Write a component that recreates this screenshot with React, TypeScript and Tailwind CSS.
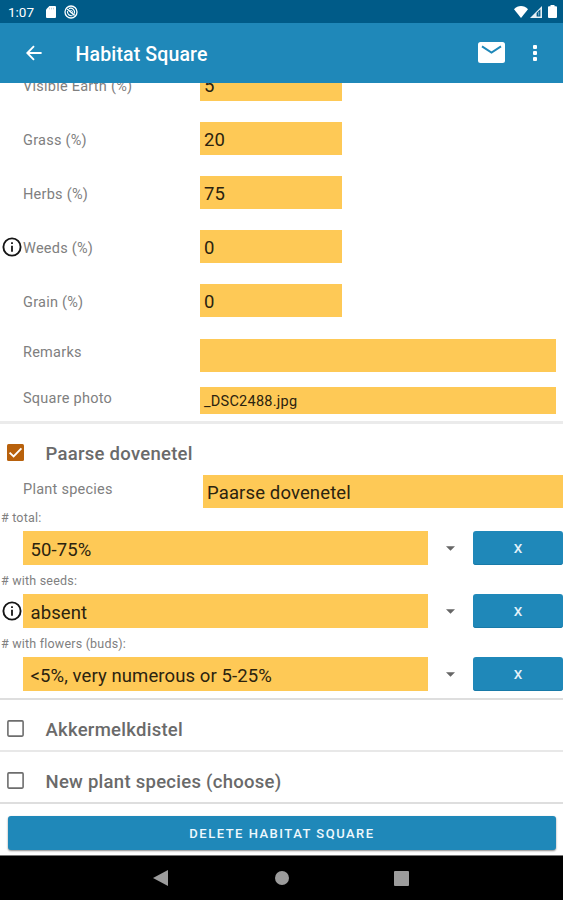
import { useState } from "react";

const coverage = [
  { label: "Visible Earth (%)", value: "5", info: false },
  { label: "Grass (%)", value: "20", info: false },
  { label: "Herbs (%)", value: "75", info: false },
  { label: "Weeds (%)", value: "0", info: true },
  { label: "Grain (%)", value: "0", info: false },
];

const counts = [
  { label: "# total:", value: "50-75%", info: false },
  { label: "# with seeds:", value: "absent", info: true },
  { label: "# with flowers (buds):", value: "<5%, very numerous or 5-25%", info: false },
];

function InfoIcon() {
  return (
    <svg width="20" height="20" viewBox="0 0 20 20" fill="none">
      <circle cx="10" cy="10" r="8.6" stroke="#151515" strokeWidth="1.9" />
      <path d="M9.1 5.2h1.8v1.9H9.1zM9.1 8.7h1.8v6H9.1z" fill="#151515" />
    </svg>
  );
}

function StatusBar() {
  return (
    <div className="flex h-[23px] shrink-0 items-center bg-[#005b88] pr-[6px] pl-[8px] text-white">
      <span className="w-[38px] pt-[2px] text-[13.5px] leading-none">1:07</span>
      <svg className="mt-px" width="10" height="12" viewBox="0 0 10 12">
        <path d="M3.4 0H9a1 1 0 0 1 1 1v10a1 1 0 0 1-1 1H1a1 1 0 0 1-1-1V3.4z" fill="#fff" />
        <path d="M3.5 1.8v1.6M5.5 1.8v1.6M7.5 1.8v1.6" stroke="#9fc3d6" strokeWidth="0.7" />
      </svg>
      <svg className="ml-[8px]" width="14" height="14" viewBox="0 0 14 14" fill="none" stroke="#fff">
        <circle cx="7" cy="7" r="6" strokeWidth="1.3" />
        <path d="M3.2 4l7.4 6.4" strokeWidth="1.4" />
        <path d="M5 3.6a4 4 0 0 1 5.4 5M3.5 6.2a3.8 3.8 0 0 0 5 4.3" strokeWidth="1.2" />
        <path d="M6.4 5.6a1.7 1.7 0 0 1 2.3 2" strokeWidth="1" />
      </svg>
      <svg className="ml-auto" width="14" height="12" viewBox="0 0 14 12">
        <path d="M7 12L0 3.2C2 1 4.4 0 7 0s5 1 7 3.2z" fill="#fff" />
      </svg>
      <svg className="ml-[2px]" width="12" height="12" viewBox="0 0 12 12">
        <path d="M0 12L12 0v12z" fill="#e6f0f5" />
        <path d="M6.6 7L10.4 3.2v7.2H6.6z" fill="#005b88" />
        <path d="M8.7 6v3.6" stroke="#9fc3d6" strokeWidth="0.8" />
      </svg>
      <svg className="ml-[6px]" width="9" height="13" viewBox="0 0 9 13">
        <path d="M2.5 0h4v1.3H8a1 1 0 0 1 1 1V12a1 1 0 0 1-1 1H1a1 1 0 0 1-1-1V2.3a1 1 0 0 1 1-1h1.5z" fill="#fff" />
      </svg>
    </div>
  );
}

function AppBar() {
  return (
    <header className="flex h-[60px] shrink-0 items-center bg-[#1f88b9] pr-[26px] pl-[26px] text-white">
      <svg className="mb-px" width="16" height="16" viewBox="0 0 16 16" fill="none" stroke="#fff" strokeWidth="1.9">
        <path d="M15.6 8H1.6M8 1.2L1.3 8L8 14.8" />
      </svg>
      <h1 className="ml-[33.5px] pt-[3px] text-[19.5px] leading-none font-medium tracking-[0.15px]">Habitat Square</h1>
      <svg className="ml-auto mb-px" width="27" height="21" viewBox="0 0 27 21">
        <rect width="27" height="21" rx="2.5" fill="#fff" />
        <path d="M4 4.4L13.5 10.6L23 4.4" fill="none" stroke="#1f88b9" strokeWidth="1.9" />
      </svg>
      <svg className="ml-[28px]" width="4" height="16" viewBox="0 0 4 16" fill="#fff">
        <rect width="4" height="4" rx="1" />
        <rect y="6" width="4" height="4" rx="1" />
        <rect y="12" width="4" height="4" rx="1" />
      </svg>
    </header>
  );
}

function Checkbox({ checked, onChange }: { checked: boolean; onChange: () => void }) {
  return (
    <button onClick={onChange} className="ml-[7px] h-[17px] w-[17px] shrink-0">
      <svg width="17" height="17" viewBox="0 0 17 17" fill="none">
        {checked ? (
          <>
            <rect width="17" height="17" rx="1.5" fill="#b8610c" />
            <path d="M2.6 8.6L6.6 12.4L14.4 4.4" stroke="#fff" strokeWidth="1.9" />
          </>
        ) : (
          <rect x="0.9" y="0.9" width="15.2" height="15.2" rx="1" stroke="#6d6d6d" strokeWidth="1.6" />
        )}
      </svg>
    </button>
  );
}

function SpeciesHeader({ name, on }: { name: string; on: boolean }) {
  const [checked, setChecked] = useState(on);

  return (
    <div className="flex h-[19px] items-center">
      <Checkbox checked={checked} onChange={() => setChecked(!checked)} />
      <span className="ml-[21.5px] pt-[4px] text-[18.5px] leading-none font-medium tracking-[0.27px] text-[#6a6a6a]">
        {name}
      </span>
    </div>
  );
}

function App() {
  return (
    <div className="flex h-[900px] w-[563px] flex-col overflow-hidden bg-white font-[Roboto,sans-serif]">
      <StatusBar />
      <AppBar />

      <main className="h-[772px] shrink-0 overflow-hidden">
        <div className="-mt-[15px] flex flex-col gap-[21px]">
          {coverage.map((row) => (
            <div key={row.label} className="flex h-[33px] items-center">
              <div className="w-[23px] pl-[2px]">{row.info && <InfoIcon />}</div>
              <span className="w-[177px] pt-[6px] text-[14.5px] leading-none tracking-[0.25px] text-[#808080]">
                {row.label}
              </span>
              <div className="flex h-[33px] w-[142px] items-center bg-[#fec956] pt-[3px] pl-[4px] text-[18.5px] leading-none text-[#2b230f]">
                {row.value}
              </div>
            </div>
          ))}
        </div>

        <div className="mt-[22px] flex h-[33px] pr-[7px] pl-[23px]">
          <span className="w-[177px] pt-[7px] text-[14.5px] leading-none tracking-[0.25px] text-[#808080]">Remarks</span>
          <div className="flex-1 bg-[#fec956]" />
        </div>
        <div className="mt-[15px] flex h-[27px] pr-[7px] pl-[23px]">
          <span className="w-[177px] pt-[5px] text-[14.5px] leading-none tracking-[0.25px] text-[#808080]">
            Square photo
          </span>
          <div className="flex-1 bg-[#fec956] pt-[8px] pl-[4px] text-[14.5px] leading-none tracking-[0.25px] text-[#2b230f]">
            _DSC2488.jpg
          </div>
        </div>

        <section className="mt-[7px] h-[277px] border-t-[3px] border-[#ebebeb] pt-[19px]">
          <SpeciesHeader name="Paarse dovenetel" on />
          <div className="mt-[13px] flex h-[33px] pl-[23px]">
            <span className="w-[180px] pt-[8px] text-[14.5px] leading-none tracking-[0.25px] text-[#808080]">
              Plant species
            </span>
            <div className="flex flex-1 items-center bg-[#fec956] pt-[3px] pl-[4px] text-[18.5px] leading-none tracking-[0.13px] text-[#2b230f]">
              Paarse dovenetel
            </div>
          </div>
          {counts.map((row) => (
            <div key={row.label} className="h-[63px]">
              <div className="h-[23px] pt-[4px] pl-[1px] text-[12.5px] leading-none tracking-[0.2px] text-[#808080]">
                {row.label}
              </div>
              <div className="flex h-[34px] items-center">
                <div className="w-[23px] pl-[2px]">{row.info && <InfoIcon />}</div>
                <div className="flex h-[34px] w-[405px] items-center bg-[#fec956] pt-[4px] pl-[7.5px] text-[18.5px] leading-none tracking-[0.1px] text-[#2b230f]">
                  {row.value}
                </div>
                <svg className="ml-[18px]" width="9" height="5" viewBox="0 0 9 5">
                  <path d="M0 0.3h9L4.5 4.8z" fill="#666" />
                </svg>
                <button className="ml-[18px] h-[34px] w-[90px] rounded-[3px] bg-[#1f88b9] pt-px text-[13.5px] font-medium text-[#e4f2f9] shadow-[inset_0_-1px_0_#187aa8]">
                  X
                </button>
              </div>
            </div>
          ))}
        </section>

        <section className="h-[52px] border-t-2 border-[#dedede] pt-[19px]">
          <SpeciesHeader name="Akkermelkdistel" on={false} />
        </section>
        <section className="h-[54px] border-y-2 border-t-[#e8e8e8] border-b-[#dedede] pt-[19px]">
          <SpeciesHeader name="New plant species (choose)" on={false} />
        </section>

        <button className="mt-[12px] ml-[8px] block h-[34px] w-[548px] rounded-[3px] bg-[#1f88b9] pt-[2px] text-[13px] font-medium tracking-[1.5px] text-[#eef8fd] shadow-[0_1px_2px_#888]">
          DELETE HABITAT SQUARE
        </button>
      </main>

      <nav className="flex h-[45px] shrink-0 items-center border-t border-[#777] bg-black pl-[153px]">
        <svg width="15" height="16" viewBox="0 0 15 16">
          <path d="M15 0v16L0 8z" fill="#9c9c9c" />
        </svg>
        <div className="ml-[107px] h-[14px] w-[14px] rounded-full bg-[#9c9c9c]" />
        <div className="ml-[105px] h-[15px] w-[15px] rounded-[1px] bg-[#9c9c9c]" />
      </nav>
    </div>
  );
}

export default App;
